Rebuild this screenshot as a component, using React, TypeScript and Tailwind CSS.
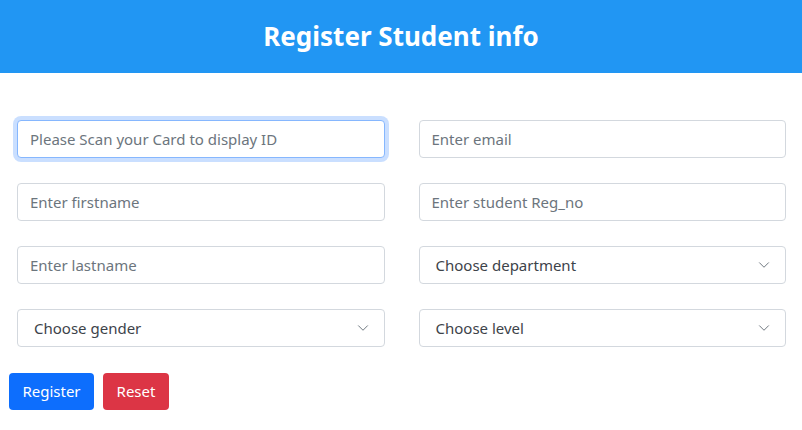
import { ChevronDown } from "lucide-react";

const font = { fontFamily: '"Segoe UI", "Noto Sans", "Open Sans", sans-serif' };

function TextField({ placeholder, focused }: { placeholder: string; focused?: boolean }) {
  return (
    <input
      type="text"
      placeholder={placeholder}
      className={`h-[38px] w-full rounded-[4px] border bg-white px-3 text-[15px] text-[#212529] outline-none placeholder:text-[#6c757d] ${
        focused ? "border-[#86b7fe] shadow-[0_0_0_4px_rgba(13,110,253,0.22)]" : "border-[#d3d8de]"
      }`}
    />
  );
}

function SelectField({ label }: { label: string }) {
  return (
    <div className="flex h-[38px] w-full items-center justify-between rounded-[4px] border border-[#d3d8de] bg-white pl-4 pr-[12px] text-[15px] text-[#3d434a]">
      <span>{label}</span>
      <ChevronDown size={18} strokeWidth={1.3} className="text-[#6c757d]" />
    </div>
  );
}

export default function App() {
  return (
    <div className="h-[430px] w-[802px] bg-white" style={font}>
      <header className="flex h-[73px] items-center justify-center bg-[#2196f3]">
        <h1 className="text-[26px] font-bold text-white">Register Student info</h1>
      </header>

      <form className="pt-[47px]">
        <div className="grid grid-cols-2 gap-x-[34px] gap-y-[25px] pl-[17px] pr-[16px]">
          <TextField placeholder="Please Scan your Card to display ID" focused />
          <TextField placeholder="Enter email" />
          <TextField placeholder="Enter firstname" />
          <TextField placeholder="Enter student Reg_no" />
          <TextField placeholder="Enter lastname" />
          <SelectField label="Choose department" />
          <SelectField label="Choose gender" />
          <SelectField label="Choose level" />
        </div>

        <div className="mt-[26px] flex gap-[9px] pl-[9px]">
          <button type="button" className="h-[37px] w-[85px] rounded-[4px] bg-[#0d6efd] text-[15px] text-white">
            Register
          </button>
          <button type="button" className="h-[37px] w-[66px] rounded-[4px] bg-[#dc3545] text-[15px] text-white">
            Reset
          </button>
        </div>
      </form>
    </div>
  );
}
